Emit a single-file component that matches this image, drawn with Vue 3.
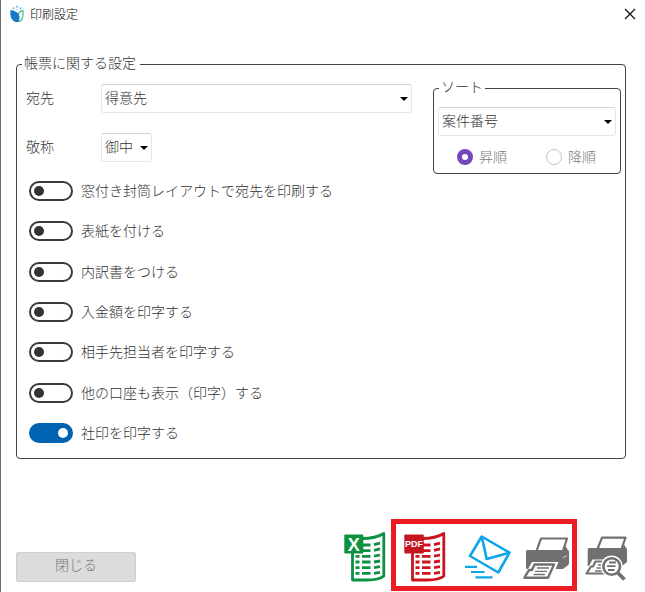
<script setup>
import { ref } from 'vue'

const recipient = ref('得意先')
const honorific = ref('御中')
const sortKey = ref('案件番号')
const order = ref('asc')

const options = ref([
  { id: 'window', label: '窓付き封筒レイアウトで宛先を印刷する', on: false },
  { id: 'cover', label: '表紙を付ける', on: false },
  { id: 'detail', label: '内訳書をつける', on: false },
  { id: 'deposit', label: '入金額を印字する', on: false },
  { id: 'contact', label: '相手先担当者を印字する', on: false },
  { id: 'account', label: '他の口座も表示（印字）する', on: false },
  { id: 'seal', label: '社印を印字する', on: true },
])
</script>

<template>
  <div class="window">
    <header class="titlebar">
      <svg class="logo" viewBox="0 0 16 18" width="16" height="18" aria-hidden="true">
        <path d="M8.500 16.600 C13.500 16.600 14.500 12 14 5.500 C11.500 6 10 7.500 9 10" fill="#fff" stroke="#5cc3a5" stroke-width="1.400" />
        <path d="M1.500 5 C6 5.500 10.500 8 10.500 12.500 C10.500 14.500 10 16.500 8.500 17.300 C3 17 0.600 12 1.500 5Z" fill="#1878c4" />
        <circle cx="4.500" cy="3.200" r="1" fill="#67b6e6" />
        <circle cx="8" cy="1.700" r="1" fill="#67b6e6" />
        <circle cx="11.500" cy="3.200" r="1" fill="#67b6e6" />
        <circle cx="8" cy="4.700" r="0.800" fill="#9bd2ee" />
      </svg>
      <h1 class="title">印刷設定</h1>
      <button class="close" type="button" aria-label="閉じる">
        <svg viewBox="0 0 12 12" width="12" height="12"><path d="M1 1 L11 11 M11 1 L1 11" stroke="#111" stroke-width="1.200" /></svg>
      </button>
    </header>

    <main class="body">
      <fieldset class="group">
        <legend>帳票に関する設定</legend>
        <div class="top">
          <div class="fields">
            <label for="recipient">宛先</label>
            <span class="combo">
              <select id="recipient" v-model="recipient"><option>得意先</option></select>
            </span>
            <label for="honorific">敬称</label>
            <span class="combo short">
              <select id="honorific" v-model="honorific"><option>御中</option></select>
            </span>
          </div>

          <fieldset class="group sort">
            <legend>ソート</legend>
            <span class="combo">
              <select v-model="sortKey" aria-label="ソート"><option>案件番号</option></select>
            </span>
            <div class="orders">
              <label><input v-model="order" type="radio" name="order" value="asc" /><span>昇順</span></label>
              <label><input v-model="order" type="radio" name="order" value="desc" /><span>降順</span></label>
            </div>
          </fieldset>
        </div>

        <div class="toggles">
          <label v-for="o in options" :key="o.id" class="toggle">
            <input v-model="o.on" type="checkbox" role="switch" />
            <span>{{ o.label }}</span>
          </label>
        </div>
      </fieldset>
    </main>

    <footer class="footer">
      <button class="dismiss" type="button">閉じる</button>
      <div class="actions">
        <button class="icon" type="button" aria-label="Excel">
          <svg viewBox="0 0 42 54" width="42" height="54">
            <g fill="none" stroke="#0b9140" stroke-width="2.800" stroke-linejoin="round">
              <path d="M8.500 24 V52 H23 C32 52 37 50.500 39.800 48 V5.500 C35 8.500 30 10.500 18 10.500" />
              <path d="M11.500 28.300h4M11.500 34h4M11.500 39.700h4M11.500 45.400h4M18 17h8.500M18 22.600h8.500M18 28.300h8.500M18 34h8.500M18 39.700h8.500M18 45.400h8.500M30 16.700l6-1.500M30 22.400l6-1.500M30 28.200l6-1.200M30 34l6-1M30 39.700l6-1M30 45.400l6-1" />
            </g>
            <rect x="0.300" y="6.500" width="19" height="19" rx="1" fill="#0b9140" />
            <text class="mark" x="9.800" y="22.500" font-size="18" text-anchor="middle">X</text>
          </svg>
        </button>
        <div class="marked">
          <button class="icon" type="button" aria-label="PDF">
            <svg viewBox="0 0 42 54" width="42" height="54">
              <g fill="none" stroke="#cc1420" stroke-width="2.800" stroke-linejoin="round">
                <path d="M8.500 24 V52 H23 C32 52 37 50.500 39.800 48 V5.500 C35 8.500 30 10.500 18 10.500" />
                <path d="M11.500 28.300h4M11.500 34h4M11.500 39.700h4M11.500 45.400h4M18 17h8.500M18 22.600h8.500M18 28.300h8.500M18 34h8.500M18 39.700h8.500M18 45.400h8.500M30 16.700l6-1.500M30 22.400l6-1.500M30 28.200l6-1.200M30 34l6-1M30 39.700l6-1M30 45.400l6-1" />
              </g>
              <rect x="0.300" y="6.500" width="19.500" height="19" rx="1" fill="#c41622" />
              <text class="mark" x="10" y="19" font-size="9" text-anchor="middle">PDF</text>
            </svg>
          </button>
          <button class="icon" type="button" aria-label="メール">
            <svg viewBox="-6 0 52 54" width="52" height="54">
              <g fill="none" stroke="#0da5ed" stroke-width="2.600" stroke-linejoin="round">
                <path d="M16.700 8.500 L44.500 24.700 L33.300 44.500 L5 28 Z" />
                <path d="M16.700 8.500 L21.700 31 L44.500 24.700" />
                <path d="M0 38.800H12M6 44H19.500M10.500 49.300H27.500" stroke-width="2.200" />
              </g>
            </svg>
          </button>
          <button class="icon" type="button" aria-label="印刷">
            <svg viewBox="0 0 48 54" width="48" height="54">
              <path d="M13.500 23 L18 10.500 H44 L40 23" fill="#fff" stroke="#707070" stroke-width="2.200" stroke-linejoin="round" />
              <path d="M4.500 22 H40.500 L42.500 18 L44.500 21.500 Q46 22 46 24 V35 Q46 37 44 38 L40 41 H4 Q3 41 3 39.500 V24 Q3 22 4.500 22Z" fill="#707070" />
              <path d="M39.500 30 L44 27.500" stroke="#bbb" stroke-width="1.200" />
              <path d="M9 34 H35.500 L27.500 53 H-2 Z" fill="#fff" />
              <path d="M11.500 36.500 H31 L25 49.700 H1.500 L6 42 H9 Z" fill="#fff" stroke="#707070" stroke-width="2.400" stroke-linejoin="round" />
              <path d="M14 40H26M12 43.300H24M10.500 46.500H22" stroke="#707070" stroke-width="1.300" />
            </svg>
          </button>
        </div>
        <button class="icon" type="button" aria-label="印刷プレビュー">
          <svg viewBox="0 0 44 54" width="44" height="54">
            <path d="M12.500 21 L17 9.700 H40.500 L36.500 21" fill="#fff" stroke="#707070" stroke-width="2.200" stroke-linejoin="round" />
            <path d="M4 20 H37.500 L39 16.500 L41 19.500 Q42 20 42 22 V34 L37 38 H2.700 V21.500 Q2.700 20 4 20Z" fill="#707070" />
            <path d="M7.500 31.500 H33 L26 49 H-2 Z" fill="#fff" />
            <path d="M24 45.500 H1.500 L6 38.500 H8 L10.500 33.500 H28" fill="none" stroke="#707070" stroke-width="2.200" stroke-linejoin="round" />
            <path d="M13 37H18M11.500 40H17M10 43H17" stroke="#707070" stroke-width="1.300" />
            <circle cx="26.700" cy="38.500" r="11" fill="#fff" />
            <path d="M33 45 L39 51" stroke="#fff" stroke-width="6" />
            <path d="M33 45 L39.500 51.500" stroke="#707070" stroke-width="3.800" />
            <circle cx="26.700" cy="38.500" r="8.300" fill="#fff" stroke="#707070" stroke-width="2.600" />
            <path d="M24 34.500H31M22 38.200H30.500M23 42H29.500" stroke="#707070" stroke-width="1.800" />
          </svg>
        </button>
      </div>
    </footer>
  </div>
</template>

<style>
body {
  margin: 0;
  background: #fff;
}
</style>

<style scoped>
.window {
  box-sizing: border-box;
  min-height: 100vh;
  display: flex;
  flex-direction: column;
  border-left: 1px solid #6c6c6e;
  color: #333;
  font: 300 14px/20px "Noto Sans CJK JP", sans-serif;
}
button,
select,
input {
  margin: 0;
  font: inherit;
  color: inherit;
}
.titlebar {
  display: flex;
  align-items: center;
  height: 28px;
  padding: 0 9px 0 8px;
}
.logo {
  display: block;
}
.title {
  flex: 1;
  margin: 0 0 0 5px;
  font-size: 12px;
  font-weight: 300;
  color: #000;
}
.close,
.icon {
  display: block;
  padding: 0;
  border: 0;
  background: none;
}
.close svg,
.icon svg {
  display: block;
}
.body {
  padding: 24px 19px 0 15px;
}
.group {
  min-width: 0;
  margin: 0;
  padding: 8px 4px 14px 9px;
  border: 1px solid #444;
  border-radius: 4px;
}
.group > legend {
  margin-left: -4px;
  padding: 0 4px 4px 2px;
}
.top {
  display: grid;
  grid-template-columns: 5fr 188px;
  column-gap: 21px;
  align-items: start;
}
.fields {
  display: grid;
  grid-template-columns: 75px 1fr;
  row-gap: 20px;
  align-items: center;
}
.fields label {
  padding-bottom: 4px;
}
.toggle span,
.orders span {
  padding-bottom: 2px;
}
.combo {
  position: relative;
  display: block;
}
.combo::after {
  content: "";
  position: absolute;
  right: 4px;
  top: 13px;
  border: 4px solid transparent;
  border-top-color: #000;
  border-bottom: 0;
  pointer-events: none;
}
.combo.short {
  width: 51px;
}
select {
  display: block;
  box-sizing: border-box;
  width: 100%;
  height: 29px;
  padding: 0 16px 3px 3px;
  border: 1px solid #e4e8ee;
  border-top-color: #d2d4d8;
  border-radius: 3px;
  background: #fff;
  appearance: none;
}
.sort {
  margin-top: -8px;
  padding: 7px 4px 6px;
}
.sort > legend {
  margin-left: 1px;
  padding: 0 2px 4px;
}
.orders {
  display: flex;
  justify-content: space-between;
  margin-top: 11px;
  padding: 0 20px 0 19px;
  line-height: 18px;
  color: #7c7c7c;
}
.orders label {
  display: flex;
  align-items: center;
  gap: 6px;
}
.orders input {
  box-sizing: border-box;
  width: 16px;
  height: 16px;
  border: 1px solid #c4c4c4;
  border-radius: 50%;
  background: #fff;
  appearance: none;
}
.orders input:checked {
  border: 5px solid #7448b8;
}
.toggles {
  display: flex;
  flex-direction: column;
  justify-content: space-between;
  min-height: 264px;
  margin-top: 6px;
  padding-left: 3px;
}
.toggle {
  display: flex;
  align-items: center;
  gap: 8px;
}
.toggle input {
  display: flex;
  align-items: center;
  box-sizing: border-box;
  width: 44px;
  height: 20px;
  padding: 0 3px;
  border: 2px solid #3a3a3a;
  border-radius: 10px;
  appearance: none;
}
.toggle input::before {
  content: "";
  width: 10px;
  height: 10px;
  border-radius: 50%;
  background: #333;
}
.toggle input:checked {
  justify-content: flex-end;
  border-color: #0063b1;
  background: #0063b1;
}
.toggle input:checked::before {
  background: #fff;
}
.footer {
  display: flex;
  justify-content: space-between;
  align-items: flex-end;
  margin-top: auto;
  padding: 0 16px 1px 15px;
}
.dismiss {
  width: 120px;
  height: 30px;
  margin-bottom: 9px;
  padding: 0 0 6px;
  border: 1px solid #cfcfcf;
  border-radius: 2px;
  background: #dcdcdc;
  color: #777;
}
.actions {
  display: flex;
  align-items: center;
  gap: 5px;
}
.actions > .icon:last-child {
  margin-left: 3px;
}
.marked {
  display: flex;
  align-items: center;
  justify-content: space-between;
  box-sizing: border-box;
  width: 186px;
  height: 72px;
  padding: 0 1px 0 8px;
  border: 5px solid #ed1c24;
}
.mark {
  fill: #fff;
  font-family: "Liberation Sans", sans-serif;
  font-weight: 700;
}
</style>
